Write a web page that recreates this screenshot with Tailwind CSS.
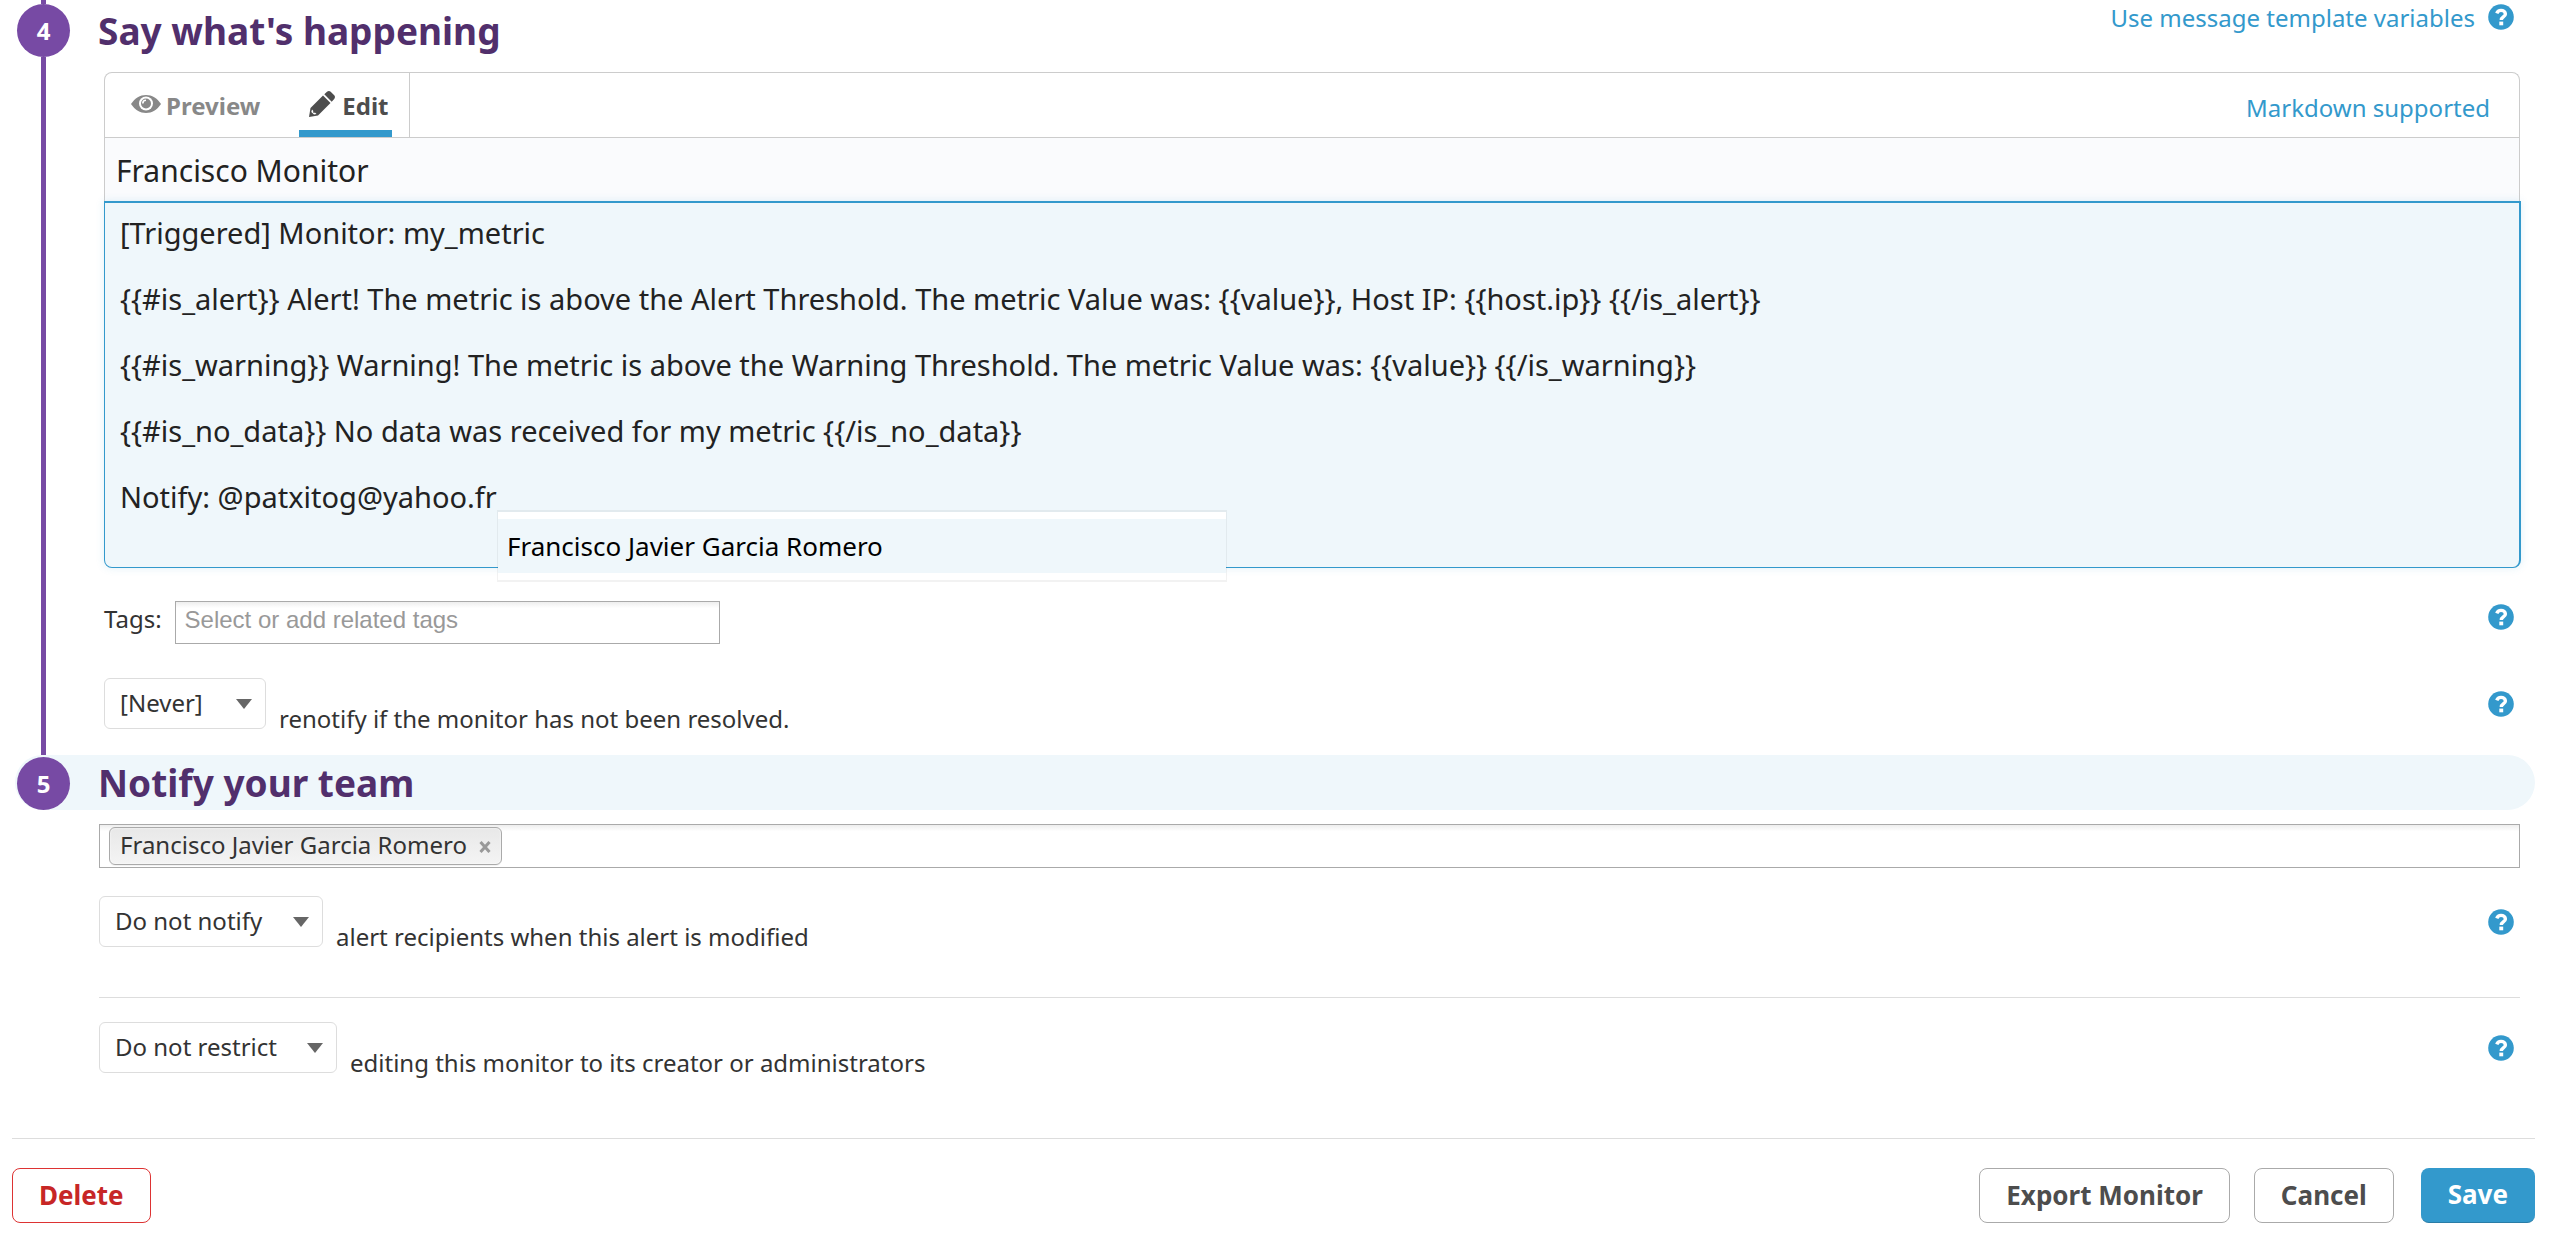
<!DOCTYPE html>
<html lang="en">
<head>
<meta charset="utf-8">
<title>Edit monitor</title>
<script src="https://cdn.jsdelivr.net/npm/@tailwindcss/browser@4"></script>
</head>
<body class="bg-white font-['Noto_Sans','Open_Sans',sans-serif] text-2xl leading-8 text-[#333]">
<svg class="hidden">
  <symbol id="help" viewBox="0 0 26 26">
    <circle cx="13" cy="13" r="12.8" fill="#3399cc"/>
    <path d="M8.800 9.400C9.500 7.300 11 6.400 13 6.400c2.400 0 4.400 1.300 4.400 3.500 0 3-4.100 3.100-4.100 6" fill="none" stroke="#fff" stroke-width="3.400"/>
    <path d="M11.300 17.600h3.900v3.700h-3.900z" fill="#fff"/>
  </symbol>
</svg>
<form>
  <section class="flex">
    <div class="ml-[17px] flex w-[53px] shrink-0 flex-col items-center">
      <div class="h-1 w-[5px] bg-[#774aa4]"></div>
      <div class="flex size-[53px] items-center justify-center rounded-full bg-[#774aa4] font-bold text-white">4</div>
      <div class="w-[5px] flex-1 bg-[#774aa4]"></div>
    </div>
    <div class="mr-11 ml-7 min-w-0 flex-1 pb-5">
      <header class="flex h-[72px] justify-between pr-[6px]">
        <h2 class="pt-[6px] text-[37px] leading-[50px] font-bold text-[#512f6c]">Say what's happening</h2>
        <div class="flex h-9 items-start gap-[13px]">
          <a href="#" class="pt-[2px] text-[#3399cc]">Use message template variables</a>
          <button type="button" aria-label="Help" class="pt-1"><svg class="size-[26px]"><use href="#help"/></svg></button>
        </div>
      </header>
      <div class="ml-[6px]">
        <div class="rounded-t-lg border border-b-0 border-[#ccc]">
          <div class="flex h-[65px] items-stretch justify-between border-b border-[#ccc]">
            <div class="flex border-r border-[#ccc] pr-[17px] pl-[26px]">
              <button type="button" class="flex items-center gap-[5px] pt-[2px] font-bold text-[#888]">
                <svg class="mb-1 h-[18px] w-[30px]" viewBox="0 0 30 18"><path d="M0 9C4 3 9 0 15 0s11 3 15 9c-4 6-9 9-15 9S4 15 0 9z" fill="#888"/><circle cx="15" cy="8.500" r="7" fill="#fff"/><circle cx="15" cy="8.500" r="5" fill="#888"/><path d="M11.800 8.500A3.200 3.200 0 0 1 15 5.300" fill="none" stroke="#fff" stroke-width="1.600"/></svg>
                Preview
              </button>
              <button type="button" class="ml-[39px] flex items-center gap-[7px] border-b-[7px] border-[#3399cc] pt-2 pr-1 pl-[10px] font-bold text-[#4d4d4d]">
                <svg class="mb-1 h-[26px] w-[26px]" viewBox="0 0 26 26"><path d="M0 26l1.500-9L14 4.500l7.500 7.500L9 24.500z" fill="#4d4d4d"/><path d="M15.300 3.200L18 .8c1.200-1 2.600-1 3.700 0l3.500 3.500c1 1.100 1 2.500 0 3.600l-2.500 2.800z" fill="#4d4d4d"/><path d="M3 18.500l1.200 1.200v2h2l1.300 1.300-2.500.6-2.700-2.600z" fill="#fff"/></svg>
                Edit
              </button>
            </div>
            <a href="#" class="self-center pt-[6px] pr-[29px] text-[#3399cc]">Markdown supported</a>
          </div>
          <input aria-label="Monitor name" value="Francisco Monitor" class="block h-[63px] w-full bg-[#fafbfd] px-[11px] pt-[2px] text-3xl leading-10 text-[#222] outline-none">
        </div>
        <div class="relative -mr-px">
          <textarea aria-label="Message" spellcheck="false" class="block h-[367px] w-full resize-none rounded-b-lg border border-t-2 border-r-2 border-[#3399cc] bg-[#eff7fb] px-[15px] pt-[13px] text-[29px] leading-[33px] text-[#222] shadow-[0_0_8px_rgba(51,153,204,0.15)] outline-none">[Triggered] Monitor: my_metric

{{#is_alert}} Alert! The metric is above the Alert Threshold. The metric Value was: {{value}}, Host IP: {{host.ip}} {{/is_alert}}

{{#is_warning}} Warning! The metric is above the Warning Threshold. The metric Value was: {{value}} {{/is_warning}}

{{#is_no_data}} No data was received for my metric {{/is_no_data}}

Notify: @patxitog@yahoo.fr</textarea>
          <ul class="absolute top-[309px] left-[393px] w-[730px] border border-y-2 border-black/5 bg-white bg-clip-padding py-[7px]">
            <li class="bg-[#eff7fb] px-[9px] text-[26px] leading-[54px] text-black">Francisco Javier Garcia Romero</li>
          </ul>
        </div>
        <div class="mt-[33px] flex items-start pr-[6px]">
          <label for="tags" class="pt-[2px]">Tags:</label>
          <input id="tags" placeholder="Select or add related tags" class="ml-[13px] h-[43px] w-[545px] border border-[#aaa] bg-linear-to-b from-[#eee] to-white to-15% px-[9px] pb-[6px] font-['Liberation_Sans',Arial,sans-serif] placeholder:text-[#999]">
          <button type="button" aria-label="Help" class="mt-[3px] ml-auto"><svg class="size-[26px]"><use href="#help"/></svg></button>
        </div>
        <div class="mt-[34px] flex items-start pr-[6px]">
          <div class="relative">
            <select id="renotify" class="block h-[51px] w-[162px] appearance-none rounded-md border border-[#ddd] bg-white pr-12 pb-[2px] pl-[15px]"><option>[Never]</option></select>
            <svg class="pointer-events-none absolute top-[21px] right-[14px] h-[10px] w-4" viewBox="0 0 16 10"><path d="M0 0h16L8 10z" fill="#666"/></svg>
          </div>
          <label for="renotify" class="mt-[25px] ml-[13px]">renotify if the monitor has not been resolved.</label>
          <button type="button" aria-label="Help" class="mt-[13px] ml-auto"><svg class="size-[26px]"><use href="#help"/></svg></button>
        </div>
      </div>
    </div>
  </section>

  <section>
    <header class="mr-[29px] ml-[15px] flex h-[55px] items-center rounded-full bg-[#eff7fb] pl-[2px]">
      <div class="mt-[2px] flex size-[53px] items-center justify-center rounded-full bg-[#774aa4] font-bold text-white">5</div>
      <h2 class="ml-7 text-[37px] leading-[50px] font-bold text-[#512f6c]">Notify your team</h2>
    </header>
    <div class="mr-11 ml-[99px] pt-[14px]">
      <div class="flex h-11 items-center border border-[#aaa] bg-linear-to-b from-[#eee] to-white to-15% px-[9px]">
        <span class="flex h-[38px] items-center rounded-md border border-[#aaa] bg-linear-to-b from-[#e8e8e8] to-[#f4f4f4] pr-[10px] pb-[2px] pl-[10px] shadow-[inset_0_0_2px_#fff,0_1px_0_rgba(0,0,0,0.05)]">
          Francisco Javier Garcia Romero
          <button type="button" aria-label="Remove Francisco Javier Garcia Romero" class="mt-1 ml-3"><svg class="h-3 w-3" viewBox="0 0 12 12"><path d="M1.500 1l9 10M10.500 1l-9 10" stroke="#999" stroke-width="3"/></svg></button>
        </span>
      </div>
      <div class="mt-7 flex items-start border-b border-[#ddd] pr-[6px] pb-11">
        <div class="relative">
          <select id="notify" class="block h-[51px] w-[224px] appearance-none rounded-md border border-[#ddd] bg-white pr-12 pb-[2px] pl-[15px]"><option>Do not notify</option></select>
          <svg class="pointer-events-none absolute top-[21px] right-[14px] h-[10px] w-4" viewBox="0 0 16 10"><path d="M0 0h16L8 10z" fill="#666"/></svg>
        </div>
        <label for="notify" class="mt-[25px] ml-[13px]">alert recipients when this alert is modified</label>
        <button type="button" aria-label="Help" class="mt-[13px] ml-auto"><svg class="size-[26px]"><use href="#help"/></svg></button>
      </div>
      <div class="mt-6 flex items-start pr-[6px] pb-[59px]">
        <div class="relative">
          <select id="restrict" class="block h-[51px] w-[238px] appearance-none rounded-md border border-[#ddd] bg-white pr-12 pb-[2px] pl-[15px]"><option>Do not restrict</option></select>
          <svg class="pointer-events-none absolute top-[21px] right-[14px] h-[10px] w-4" viewBox="0 0 16 10"><path d="M0 0h16L8 10z" fill="#666"/></svg>
        </div>
        <label for="restrict" class="mt-[25px] ml-[13px]">editing this monitor to its creator or administrators</label>
        <button type="button" aria-label="Help" class="mt-[13px] ml-auto"><svg class="size-[26px]"><use href="#help"/></svg></button>
      </div>
    </div>
  </section>

  <footer class="mr-[29px] ml-3 flex border-t border-[#ddd] pt-[29px] text-[26px] font-bold">
    <button type="button" class="h-[55px] rounded-lg border border-[#d33] px-[26px] pb-[2px] text-[#c72626]">Delete</button>
    <button type="button" class="ml-auto h-[55px] rounded-lg border border-[#aaa] px-[26px] pb-[2px] text-[#4d4d4d]">Export Monitor</button>
    <button type="button" class="ml-6 h-[55px] rounded-lg border border-[#aaa] px-[26px] pb-[2px] text-[#4d4d4d]">Cancel</button>
    <button type="submit" class="ml-[27px] h-[55px] rounded-lg border-b border-[#2a7ca6] bg-[#3399cc] px-[27px] pb-[2px] text-white">Save</button>
  </footer>
</form>
</body>
</html>
